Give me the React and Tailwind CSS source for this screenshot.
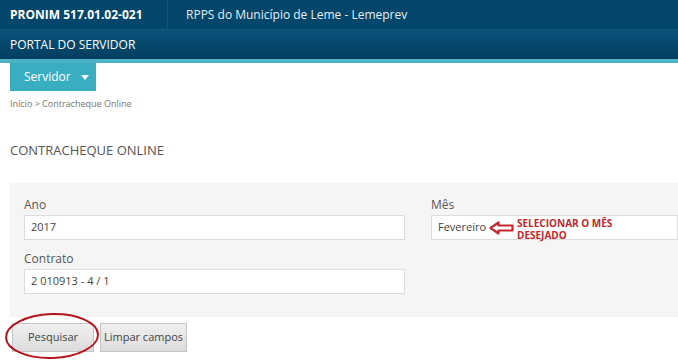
import React from 'react';

const font = { fontFamily: '"Open Sans", "Noto Sans", sans-serif' };

function Field({ label, value, className = '', children }) {
  return (
    <div className={className}>
      <div className="text-[12px] text-[#555] leading-4 mb-[2px]">{label}</div>
      <div className="relative h-[25px] bg-white border border-[#dcdcdc] flex items-center px-[6px] text-[11px] text-[#444]">
        {value}
        {children}
      </div>
    </div>
  );
}

export default function App() {
  return (
    <div className="w-[678px] h-[360px] bg-white overflow-hidden relative" style={font}>
      {/* top bar */}
      <div className="h-[30px] bg-[#03466b] flex items-stretch border-b border-[#14597d]">
        <div className="w-[168px] pl-[10px] flex items-center text-white font-bold text-[12px] border-r border-[#0d5479]">
          PRONIM 517.01.02-021
        </div>
        <div className="pl-[18px] flex items-center text-[#e6eef3] text-[12px]">
          RPPS do Município de Leme - Lemeprev
        </div>
      </div>
      <div className="h-[29px] bg-gradient-to-b from-[#08537a] to-[#023e5f] flex items-center pl-[10px] text-white text-[12px]">
        PORTAL DO SERVIDOR
      </div>
      <div className="h-[4px] bg-[#4db3c4]" />

      {/* menu */}
      <div className="pl-[10px]">
        <div className="w-[86px] h-[28px] bg-[#3aaec1] flex items-center pl-[14px] gap-[10px] text-white text-[12px]">
          Servidor
          <svg width="8" height="5" viewBox="0 0 8 5"><path d="M0 0h8L4 5z" fill="#fff" /></svg>
        </div>
      </div>

      <div className="pl-[10px] mt-[6px] text-[9px] text-[#777]">Início &gt; Contracheque Online</div>

      <div className="pl-[10px] mt-[31px] text-[13px] text-[#555] leading-4">CONTRACHEQUE ONLINE</div>

      {/* form panel */}
      <div className="ml-[10px] mt-[25px] bg-[#f5f5f5] h-[134px] pt-[14px] pl-[14px] flex gap-[26px]">
        <div className="w-[381px] flex flex-col gap-[11px]">
          <Field label="Ano" value="2017" />
          <Field label="Contrato" value="2 010913 - 4 / 1" />
        </div>
        <Field label="Mês" value="Fevereiro" className="flex-1">
          <svg className="absolute left-[57px] top-[5px]" width="25" height="14" viewBox="0 0 25 14">
            <path d="M1.5 7 L9.5 1.5 L9.5 4.5 L23.5 4.5 L23.5 9.5 L9.5 9.5 L9.5 12.5 Z" fill="none" stroke="#c1272d" strokeWidth="2.2" strokeLinejoin="round" />
          </svg>
          <div className="absolute left-[85px] top-[1px] text-[10px] leading-[12px] font-bold text-[#c1272d]">
            SELECIONAR O MÊS<br />DESEJADO
          </div>
        </Field>
      </div>

      {/* buttons */}
      <div className="pl-[12px] mt-[6px] flex gap-[6px] relative">
        <button className="w-[82px] h-[29px] bg-gradient-to-b from-[#f0f0f0] to-[#dcdcdc] border border-[#c4c4c4] text-[11px] text-[#444]">
          Pesquisar
        </button>
        <button className="w-[87px] h-[29px] bg-gradient-to-b from-[#f0f0f0] to-[#dcdcdc] border border-[#c4c4c4] text-[11px] text-[#444]">
          Limpar campos
        </button>
        <svg className="absolute left-[4px] top-[-12px]" width="96" height="50" viewBox="0 0 96 50">
          <ellipse cx="48" cy="25" rx="46" ry="22" fill="none" stroke="#b3161d" strokeWidth="2" transform="rotate(-2 48 25)" />
        </svg>
      </div>
    </div>
  );
}
